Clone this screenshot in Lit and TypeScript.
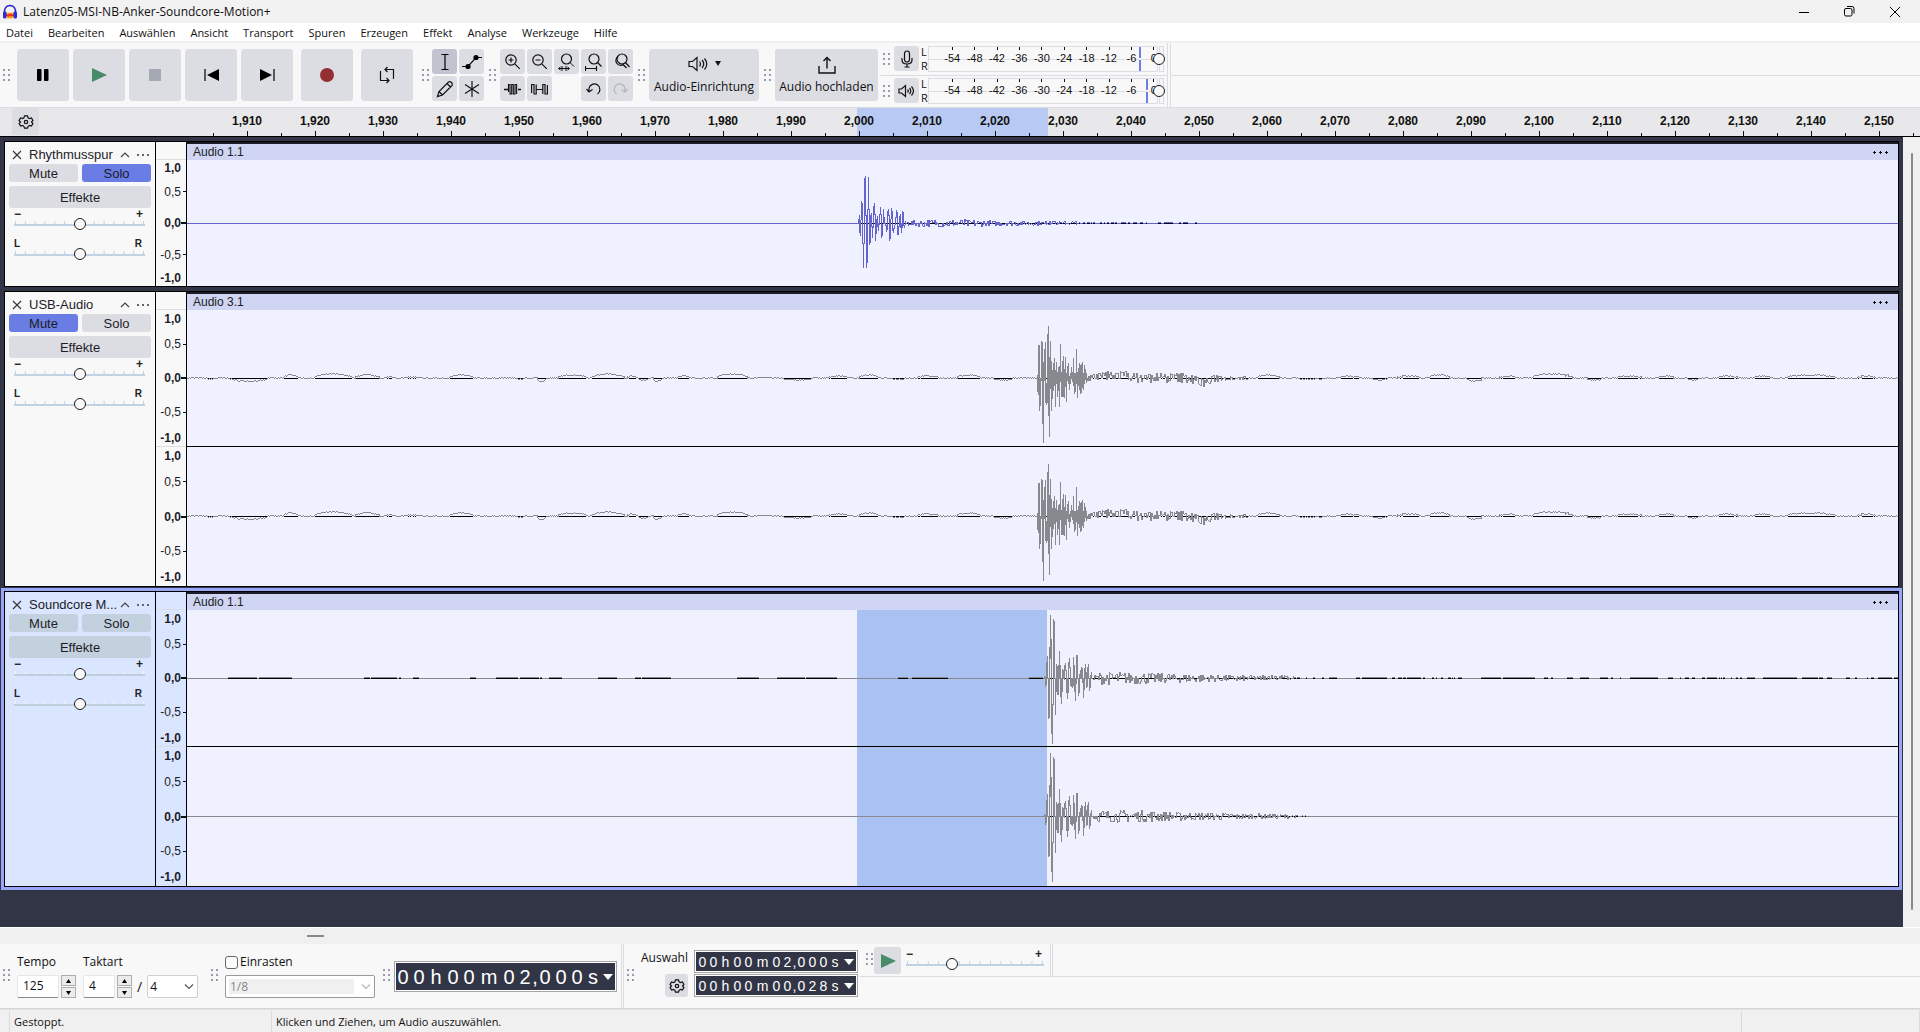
import { LitElement, html, svg, css, nothing, TemplateResult, SVGTemplateResult } from 'lit';
import { customElement, property } from 'lit/decorators.js';

/* ---------- icons ---------- */

const icon = (w: number, h: number, body: SVGTemplateResult) =>
  html`<svg width=${w} height=${h} viewBox="0 0 ${w} ${h}" fill="none" stroke="#111" stroke-width="1.2" aria-hidden="true">${body}</svg>`;

const ICONS: Record<string, TemplateResult> = {
  logo: icon(16, 16, svg`
    <path d="M3 7q2 2 2 7.500h6q0-5.500 2-7.500-2 2-5 2T3 7z" fill="#ffb52e" stroke="none"/>
    <path d="M4 10q4-2.500 8 0v3q-4 1.500-8 0z" fill="#ff9c1c" stroke="none"/>
    <path d="M3 11l2-1 1 1 1-2 1 2 1-2 1 2 1-1 2 1-2 1-5 .6z" fill="#ee2a1c" stroke="none"/>
    <path d="M2.500 9C2 4 4.500 1.500 8 1.500S14 4 13.500 9" stroke="#2525d8" stroke-width="1.600"/>
    <rect x="1" y="7.500" width="3.500" height="7" rx="1.500" fill="#2a2ae6" stroke="none"/>
    <rect x="11.500" y="7.500" width="3.500" height="7" rx="1.500" fill="#2a2ae6" stroke="none"/>`),
  pause: icon(14, 14, svg`<path d="M1.500 1.500h3.500v11H1.500zM8.500 1.500H12v11H8.500z" fill="#000" stroke="#000" stroke-linejoin="round" stroke-width="1"/>`),
  play: icon(16, 14, svg`<path d="M1 0L16 7 1 14z" fill="#4a8c6a" stroke="none"/>`),
  stop: icon(12, 12, svg`<path d="M0 0h12v12H0z" fill="#a4a8b3" stroke="none"/>`),
  start: icon(15, 14, svg`<path d="M1 1v12" stroke="#000"/><path d="M15 1v12L3 7z" fill="#000" stroke="none"/>`),
  end: icon(15, 14, svg`<path d="M14 1v12" stroke="#000"/><path d="M0 1v12l12-6z" fill="#000" stroke="none"/>`),
  record: icon(14, 14, svg`<circle cx="7" cy="7" r="7" fill="#942f31" stroke="none"/>`),
  loop: icon(16, 18, svg`<path d="M6 3.500H14.500V13M10 14.500H1.500V5M8.500 1L6 3.500l2.500 2.500M7.500 12l2.500 2.500L7.500 17"/>`),
  ibeam: icon(16, 18, svg`<path d="M4.500 1.500h7M8 1.500v15M4.500 16.500h7" stroke="#000"/>`),
  envelope: icon(20, 18, svg`<path d="M0 13.500h6L14 4.500h6" stroke="#000"/><circle cx="6" cy="13.500" r="2.600" fill="#000" stroke="none"/><circle cx="14" cy="4.500" r="2.600" fill="#000" stroke="none"/>`),
  pencil: icon(18, 18, svg`<path d="M1.500 16.500l1.500-5L12.500 2q1.500-1 3 .5t.5 3L6.500 15zM11 3.500l3.500 3.500M3 11.500L6.500 15"/>`),
  star: icon(16, 16, svg`<path d="M8 0v16M1 3.500l14 9M15 3.500L1 12.500"/>`),
  zoomin: icon(17, 17, svg`<circle cx="7" cy="7" r="5.200"/><path d="M10.800 10.800l5 5M4.500 7h5M7 4.500v5"/>`),
  zoomout: icon(17, 17, svg`<circle cx="7" cy="7" r="5.200"/><path d="M10.800 10.800l5 5M4.500 7h5"/>`),
  zoomsel: icon(17, 18, svg`<circle cx="8.500" cy="6" r="5"/><path d="M12 9.500l4 4M1 15.500h10M4 13v5M8 13v5M2.500 14l-2 1.500 2 1.500M9.500 14l2 1.500-2 1.500" stroke-width="1"/>`),
  zoomfit: icon(17, 18, svg`<circle cx="9" cy="6" r="5"/><path d="M12.500 9.500l4 4"/><path d="M.5 13v5M11.500 13v5M1 15.500h10"/>`),
  zoomtoggle: icon(18, 17, svg`<circle cx="10" cy="6" r="5"/><path d="M13.500 9.500l4 4.500"/><path d="M6 3.500a4.500 4.500 0 1 0 5.500 8M10.500 11l4 4"/>`),
  trim: icon(17, 14, svg`<path d="M0 7.500h4M14 7.500h3" stroke-width="1.300"/><path d="M4.500 10V2.500h1.500v9.500h1.700V2.500h1.600v9.500h1.700V2.500h1.600v9.500" stroke-width="1.100"/>`),
  silence: icon(17, 14, svg`<path d="M.6 11V2.500h2.400v9.500h2.200V2.500M5 7.500h7M11.800 12V2.500H14V12h2.400V3" stroke-width="1.200"/>`),
  undo: icon(17, 15, svg`<path d="M4 10V7.500a5.500 5.500 0 1 1 8.500 5.500M1.500 8L4 11l3.500-2.500"/>`),
  redo: icon(17, 15, svg`<path d="M13 10V7.500A5.500 5.500 0 1 0 4.500 13M15.500 8L13 11 9.500 8.500" stroke="#b2b4bb"/>`),
  speaker: icon(20, 16, svg`<path d="M1 5.500h3.500L9 1.500v13L4.500 10.500H1z"/><path d="M11.500 5.500q2 2.500 0 5M14 4q3.500 4 0 8M16.500 2.500q4.500 5.500 0 11"/>`),
  speakersmall: icon(17, 14, svg`<path d="M1 5h2.500L7.500 1.500v11L3.500 9H1z"/><path d="M9.500 5.500q1.500 1.500 0 3M11.500 4q2.500 3 0 6M13.500 2.500q4 4.500 0 9"/>`),
  caret: icon(6, 6, svg`<path d="M0 0h6L3 5z" fill="#111" stroke="none"/>`),
  upload: icon(18, 18, svg`<path d="M1 10v7h16v-7M9 12.500V1.500M5.500 5L9 1.500 12.500 5" stroke-width="1.400"/>`),
  mic: icon(12, 18, svg`<rect x="3.500" y="1" width="5" height="11" rx="2.500"/><path d="M1 8v2q0 4 5 4t5-4V8M6 14v3M3.500 17h5"/>`),
  gear: icon(16, 16, svg`<circle cx="8" cy="8" r="1.700"/><path d="M6.500 1.800h3l.6 2 1.300.7 2-.5 1.500 2.500-1.400 1.500 1.400 1.500-1.500 2.600-2-.6-1.300.8-.6 1.900h-3l-.6-1.900-1.300-.8-2 .6L1.100 9.500 2.500 8 1.100 6.500 2.600 4l2 .5 1.300-.7z"/>`),
  close: icon(10, 10, svg`<path d="M1 1l8 8M9 1L1 9" stroke="#333" stroke-width="1.100"/>`),
  up: icon(10, 6, svg`<path d="M1 5l4-4 4 4" stroke="#444"/>`),
  dots: icon(12, 2, svg`<path d="M0 0h2v2H0zM5 0h2v2H5zM10 0h2v2h-2z" fill="#666" stroke="none"/>`),
  clipdots: icon(15, 3, svg`<path d="M1 0h1v3H1zM0 1h3v1H0zM7 0h1v3H7zM6 1h3v1H6zM13 0h1v3h-1zM12 1h3v1h-3z" fill="#111" stroke="none"/>`),
  min: icon(10, 10, svg`<path d="M0 5.500h10" stroke="#000" stroke-width="1"/>`),
  max: icon(11, 11, svg`<rect x=".5" y="2.500" width="7.500" height="7.500" rx="1.500" stroke="#000" stroke-width="1"/><path d="M3 .5h5q2 0 2 2v5" stroke="#000" stroke-width="1"/>`),
  winclose: icon(10, 10, svg`<path d="M0 0l10 10M10 0L0 10" stroke="#000" stroke-width="1"/>`),
  chevron: icon(10, 6, svg`<path d="M1 .5l4 4 4-4" stroke="#555"/>`),
  chevronoff: icon(10, 6, svg`<path d="M1 .5l4 4 4-4" stroke="#bbb"/>`),
  spinup: icon(5, 4, svg`<path d="M0 4h5L2.500 0z" fill="#000" stroke="none"/>`),
  spindown: icon(5, 4, svg`<path d="M0 0h5L2.500 4z" fill="#000" stroke="none"/>`),
  whitecaret: icon(10, 6, svg`<path d="M0 0h10L5 6z" fill="#fff" stroke="none"/>`),
};

/* ---------- waveform data ---------- */

type Column = [number, number];
interface Wave {
  start: number;
  columns: Column[];
  tail: [number, number][];
  drift: [number, number, number][];
}

const pairs = (s: string): Column[] =>
  s.trim().split(/\s+/).map((p) => p.split(',').map(Number) as Column);

/* Each pair is the highest and lowest sample of one pixel column. */
const CLICK: Wave = {
  start: 671,
  columns: pairs(`4,0 8,-9 3,-12 22,4 20,-20 -20,-44 45,-20 47,8 8,-44 14,-39 46,14 14,-21 8,-19 10,-3 -3,-14 17,-4
    20,9 9,-17 4,-10 7,-3 0,-7 9,-1 16,9 9,-14 -1,-12 14,0 6,0 0,-2 -2,-8 12,-6 14,8 8,-17 4,-15 15,5 12,-7
    -5,-9 -2,-5 6,-1 13,6 11,-11 -3,-11 7,-3 9,-4 0,-9 12,-4 11,-2 -2,-4 2,-1`),
  tail: [[719, 2], [730, 4], [775, 4], [800, 3], [850, 2], [890, 1], [1010, 1], [1012, 0]],
  drift: [[860, 150, 1]],
};

const USB: Wave = {
  start: 850,
  columns: pairs(`3,-13 33,-16 33,-32 0,-27 37,-2 36,-45 16,-64 29,-2 36,-24 -5,-26 44,-24 52,-37 21,-58 37,-10 17,-32
    8,-20 15,-12 20,-7 8,-28 16,-5 6,-18 11,-12 12,-28 34,-3 6,-18 17,-18 22,-18 9,-19 21,-8 5,-23 12,-2 15,-5
    2,-11 5,-5 11,0 6,-3 20,-7 5,-15 5,-13 29,-5 6,-19 10,-7 15,-11 13,-15 14,-14 16,-9 5,-11 13,-5 9,-1 5,-4`),
  tail: [[900, 5], [925, 5], [960, 5], [1010, 6], [1030, 4], [1045, 2], [1065, 1], [1100, 1], [4000, 1]],
  drift: [[20, 10, -1], [43, 38, -3], [96, 16, 3], [127, 38, 4], [168, 24, 3], [196, 14, 1], [218, 14, 1], [262, 24, 3],
    [328, 10, -1], [350, 9, -3], [371, 29, 3], [405, 32, 4], [440, 9, 2], [451, 11, -2], [466, 9, -3], [490, 14, 2],
    [530, 30, 4], [570, 14, 1], [596, 28, -2], [640, 22, 2], [672, 20, 3], [704, 14, -1], [730, 22, 2], [770, 24, 3],
    [806, 20, -2], [912, 34, 3], [1005, 22, -4], [1070, 22, 3], [1110, 30, -1], [1150, 24, 2], [1186, 14, -2],
    [1210, 24, 2], [1242, 20, 3], [1280, 14, -3], [1312, 20, 2], [1345, 40, 4], [1400, 14, -2], [1430, 24, 2],
    [1470, 16, 2], [1500, 12, -2], [1530, 20, 2], [1566, 20, 2], [1600, 50, 3], [1670, 18, 2]],
};

const SPEAKER: Wave = {
  start: 857,
  columns: pairs(`2,0 1,-8 16,-6 22,0 0,-40 31,-39 63,20 39,-55 -26,-65 59,-26 57,0 0,-36 14,-13 12,-16 13,-16 27,0
    13,-18 0,-25 9,-13 8,0 13,-1 15,8 8,-14 0,-20 16,-14 20,11 11,-7 0,-8 0,-9 21,-7 13,-13 0,-22 23,-5 23,0
    0,-17 4,-14 8,0 11,0 10,-4 0,-19 10,-11 14,0 6,-9 11,-8 14,0 0,-12 3,-9 6,0`),
  tail: [[905, 3], [914, 7], [960, 6], [985, 5], [1020, 4], [1060, 3], [1100, 2], [1120, 1], [1140, 0]],
  drift: [],
};

const SPEAKER_LEFT: Wave = {
  ...SPEAKER,
  tail: [...SPEAKER.tail.slice(0, -1), [1200, 1], [1201, 0]],
  drift: [[41, 43, 1], [70, 35, 1], [95, 8, 1], [177, 37, 1], [226, 6, 1], [283, 6, 1], [309, 47, 1], [362, 13, 1], [411, 19, 1],
    [448, 36, 1], [550, 22, 1], [590, 60, 1], [711, 50, 1], [842, 14, 1], [1075, 700, 1]],
};

const WAVE_LENGTH = 3600;

function level(points: [number, number][], x: number): number {
  if (x < points[0][0]) return 0;
  for (let i = 1; i < points.length; i++) {
    if (x <= points[i][0]) {
      const [x0, a] = points[i - 1];
      const [x1, b] = points[i];
      return a + ((b - a) * (x - x0)) / (x1 - x0);
    }
  }
  return 0;
}

/* Returns the wave itself and the parts of the zero line that it leaves open. */
function wavePaths(w: Wave, mid: number): { wave: string; zero: string } {
  let seed = 7;
  const rnd = () => {
    seed = (seed * 16807) % 2147483647;
    return seed / 2147483647;
  };
  const noisy = w === USB;
  let wave = '';
  let zero = '';
  let last = 0;
  let run = 0;
  for (let x = 0; x < WAVE_LENGTH; x++) {
    const c = w.columns[x - w.start];
    let hi: number;
    let lo: number;
    if (c) {
      [hi, lo] = c;
      last = 0;
    } else {
      let base = 0;
      for (const [s, len, amp] of w.drift) {
        if (x >= s && x < s + len) {
          base = Math.abs(amp) === 1 && !noisy ? amp : amp * Math.sqrt(Math.sin((Math.PI * (x - s + 1)) / (len + 1)));
        }
      }
      if (!noisy && base) {
        /* quantised silence flips between two neighbouring steps */
        if (run === 0) {
          if (w === CLICK) run = rnd() < 0.5 ? -Math.ceil(rnd() * 3) : Math.ceil(rnd() * 2);
          else if (x > 1000) run = rnd() < 0.5 ? -Math.ceil(rnd() * 5) : Math.ceil(rnd() * (x % 130 < 60 ? 14 : 2));
          else run = rnd() < 0.12 ? -Math.ceil(rnd() * 3) : Math.ceil(rnd() * 8);
        }
        if (run < 0) {
          base = 0;
          run++;
        } else {
          run--;
        }
      }
      const amp = x < w.start ? 0 : level(w.tail, x);
      const v = Math.round(base + (noisy ? (rnd() - 0.1) * 1 : 0) + amp * (rnd() * 2 - 0.95) * (amp > 1 ? 0.9 : 0.4));
      hi = Math.max(v, Math.abs(v - last) > 1 ? last : v);
      lo = Math.min(v, Math.abs(v - last) > 1 ? last : v);
      last = v;
    }
    wave += `M${x} ${mid - hi}h1v${hi - lo + 1}h-1z`;
    if (lo >= (noisy ? 2 : 1) || hi <= -1) zero += `M${x} ${mid}h1v1h-1z`;
  }
  return { wave, zero };
}

interface Track {
  name: string;
  clip: string;
  mute: boolean;
  solo: boolean;
  focused: boolean;
  color: string;
  channels: { wave: Wave; height: number; mid: number }[];
}

const TRACKS: Track[] = [
  { name: 'Rhythmusspur', clip: 'Audio 1.1', mute: false, solo: true, focused: false, color: '#6464cc',
    channels: [{ wave: CLICK, height: 126, mid: 63 }] },
  { name: 'USB-Audio', clip: 'Audio 3.1', mute: true, solo: false, focused: false, color: '#88888f',
    channels: [{ wave: USB, height: 136, mid: 68 }, { wave: USB, height: 139, mid: 69 }] },
  { name: 'Soundcore M...', clip: 'Audio 1.1', mute: false, solo: false, focused: true, color: '#88888f',
    channels: [{ wave: SPEAKER_LEFT, height: 136, mid: 68 }, { wave: SPEAKER, height: 139, mid: 69 }] },
];

/* ---------- shared styles ---------- */

const base = css`
  * { box-sizing: border-box; }
  button { font: inherit; color: inherit; border: 0; padding: 0; margin: 0; background: #dcdde3; border-radius: 3px;
    display: flex; align-items: center; justify-content: center; }
  svg { display: block; flex: none; }
`;

/* ---------- slider with tick marks ---------- */

@customElement('tick-slider')
export class TickSlider extends LitElement {
  @property() label = '';
  @property() low = '';
  @property() high = '';
  @property({ type: Number }) value = 50;
  @property({ type: Boolean }) focused = false;

  static styles = [base, css`
    :host { display: block; font: bold 10px/12px "Liberation Sans", Arial, sans-serif; color: #222; }
    .ends { display: flex; justify-content: space-between; height: 9px; padding-right: 3px; }
    .sign { font-size: 12px; padding-right: 2px; }
    .range { appearance: none; display: block; width: 100%; height: 13px; margin: 0; background:
      linear-gradient(#bfd1e2, #bfd1e2) 0 7px / 100% 2px no-repeat,
      linear-gradient(90deg, #bfd1e2 1px, transparent 1px) 1px 4px / calc((100% - 3px) / 13) 3px repeat-x; }
    .range.light { background:
      linear-gradient(#c0cfdd, #c0cfdd) 0 7px / 100% 2px no-repeat,
      linear-gradient(90deg, #f0f4fa 1px, transparent 1px) 1px 4px / calc((100% - 3px) / 13) 3px repeat-x; }
    .range::-webkit-slider-thumb { appearance: none; width: 12px; height: 12px; border-radius: 50%;
      border: 1px solid #1c1c1c; background: #fafafa; }
  `];

  render() {
    return html`
      <div class=${this.low === '−' ? 'ends sign' : 'ends'}><span>${this.low}</span><span>${this.high}</span></div>
      <input class=${this.focused ? 'range light' : 'range'} type="range" min="0" max="100"
        .value=${String(this.value)} aria-label=${this.label}>`;
  }
}

/* ---------- time field ---------- */

@customElement('time-field')
export class TimeField extends LitElement {
  @property() text = '';
  @property() label = '';
  @property({ type: Boolean }) large = false;

  static styles = [base, css`
    :host { display: block; color: #fff; font-family: "Liberation Sans", Arial, sans-serif; }
    .box { display: flex; align-items: center; background: #323545; border: 1px solid #a5a5a8; outline: 1px solid #fff;
      outline-offset: -2px; font-size: 14px; height: 23px; padding: 0 3px 0 2px; }
    .box.large { font-size: 20px; height: 31px; padding: 0 3px 0 0; }
    .digits { display: flex; }
    .cell { width: 11px; display: flex; justify-content: center; }
    .cell.h { width: 13px; }
    .cell.m { width: 17px; }
    .cell.s { width: 12px; }
    .cell.comma { width: 3px; }
    .large .cell { width: 16px; }
    .large .cell.h { width: 18px; }
    .large .cell.m { width: 24px; }
    .large .cell.comma { width: 4px; }
    .drop { background: none; margin-left: auto; width: 10px; height: 16px; }
  `];

  render() {
    const cell = (c: string) => (/[hms]/.test(c) ? `cell ${c}` : c === ',' ? 'cell comma' : 'cell');
    return html`<div class=${this.large ? 'box large' : 'box'} role="group" aria-label=${this.label}>
      <div class="digits">${[...this.text].map((c) => html`<span class=${cell(c)}>${c}</span>`)}</div>
      <button class="drop" aria-label="Format">${ICONS.whitecaret}</button>
    </div>`;
  }
}

/* ---------- level meter ---------- */

@customElement('level-meter')
export class LevelMeter extends LitElement {
  @property() kind = 'mic';
  @property() label = '';
  @property({ type: Number }) peak = 0;

  static styles = [base, css`
    :host { display: flex; align-items: center; height: 31px; font: 11px/14px "Liberation Sans", Arial, sans-serif; color: #111; }
    .btn { width: 25px; height: 25px; }
    .lr { display: flex; flex-direction: column; margin-left: 2px; width: 7px; font: 11px/14px "Open Sans", sans-serif; }
    .scale { position: relative; width: 230px; height: 26px; border: 1px solid #dcdde3; display: flex; padding-left: 12px;
      background: linear-gradient(#dcdde3, #dcdde3) 0 12px / 100% 1px no-repeat; }
    .marks { display: flex; flex: 1; margin-right: -8px; }
    .mark { flex: 1; display: flex; flex-direction: column; align-items: center; line-height: 17px; }
    .mark::before { content: ""; width: 1px; height: 3px; background: #111; }
    .peak { position: absolute; top: 0; width: 2px; height: 24px;
      background: linear-gradient(#6a7fe6 11px, #f8f8f8 11px, #f8f8f8 13px, #6a7fe6 13px); }
    .clip { width: 5px; height: 26px; border: 1px solid #dcdde3; margin-left: 1px; }
    .thumb { position: absolute; left: 0; top: 0; width: 236px; height: 25px; margin: 0; appearance: none; background: none; }
    .thumb::-webkit-slider-thumb { appearance: none; width: 12px; height: 12px; border-radius: 50%; border: 1px solid #1c1c1c;
      background: #fafafa; }
  `];

  render() {
    return html`
      <button class="btn" aria-label=${this.label}>${ICONS[this.kind]}</button>
      <div class="lr"><span>L</span><span>R</span></div>
      <div class="scale">
        <div class="marks">${[-54, -48, -42, -36, -30, -24, -18, -12, -6, 0].map((n) => html`<span class="mark">${n}</span>`)}</div>
        <div class="peak" style="left:${this.peak}px"></div>
        <input class="thumb" type="range" min="0" max="100" .value=${'100'} aria-label=${this.label}>
      </div>
      <div class="clip"></div>`;
  }
}

/* ---------- one audio track ---------- */

@customElement('audio-track')
export class AudioTrack extends LitElement {
  @property({ attribute: false }) track!: Track;

  static styles = [base, css`
    :host { display: block; font-family: "Liberation Sans", Arial, sans-serif; color: #1c1c28; }
    .track { display: flex; border: 1px solid #000; background: #f8f8f8; }
    .track.focused { background: #dae6ff; box-shadow: 0 0 0 3px #98a5f8; }
    .panel { width: 151px; flex: none; border-right: 1px solid #000; padding: 4px 4px 0; font-size: 13px; line-height: 18px; }
    .head { display: flex; align-items: center; height: 18px; padding: 0 2px 0 3px; }
    .icon { background: none; width: 10px; height: 16px; flex: none; }
    .icon.wide { width: 12px; margin-left: 7px; }
    .name { flex: 1; padding-left: 7px; white-space: nowrap; }
    .pair { display: flex; gap: 4px; padding-bottom: 4px; }
    .tbtn { flex: 1; height: 18px; padding-top: 2px; }
    .tbtn.full { width: 100%; height: 22px; }
    .tbtn.on { background: #6a7de4; }
    .focused .tbtn { background: #c3d1de; }
    .gain { padding: 0 6px 0 5px; }
    .pan { padding: 0 6px 0 5px; margin-top: 8px; }
    .vruler { width: 31px; flex: none; border-right: 1px solid #000; padding-top: 17px; display: flex; flex-direction: column;
      font-size: 12px; line-height: 14px; }
    .vscale { border-top: 1px solid #dcdde3; display: grid; grid-template-rows: 1fr 2fr 2fr 2fr 1fr; align-items: center; }
    .vl { display: flex; justify-content: flex-end; align-items: center; gap: 2px; }
    .vl::after { content: ""; width: 3px; height: 1px; background: #111; }
    .vl.zero { gap: 0; }
    .vl.zero::after { width: 5px; height: 2px; }
    .vl.edge::after { background: none; }
    .strong { font-weight: bold; }
    .clip { flex: 1; min-width: 0; background: #eff1ff; }
    .cliphead { display: flex; align-items: center; justify-content: space-between; height: 18px; border-top: 2px solid #1c1c28;
      background: #cfd5f2; padding: 0 10px 0 6px; font-size: 12px; line-height: 14px; }
    .clipmenu { background: none; }
    .lane { position: relative; overflow: hidden; border-top: 1px solid #000; }
    .lane.first { border-top: 0; }
    .sel { position: absolute; left: 670px; top: 0; bottom: 0; width: 190px; background: #aac2f2; }
    .wave { position: relative; display: block; width: 100%; }
  `];

  render() {
    const t = this.track;
    return html`<section class=${t.focused ? 'track focused' : 'track'}>
      <div class="panel">
        <div class="head">
          <button class="icon" aria-label="Schließen">${ICONS.close}</button>
          <span class="name">${t.name}</span>
          <button class="icon" aria-label="Einklappen">${ICONS.up}</button>
          <button class="icon wide" aria-label="Menü">${ICONS.dots}</button>
        </div>
        <div class="pair">
          <button class=${t.mute ? 'tbtn on' : 'tbtn'}>Mute</button>
          <button class=${t.solo ? 'tbtn on' : 'tbtn'}>Solo</button>
        </div>
        <button class="tbtn full">Effekte</button>
        <tick-slider class="gain" label="Lautstärke" low="−" high="+" ?focused=${t.focused}></tick-slider>
        <tick-slider class="pan" label="Panorama" low="L" high="R" ?focused=${t.focused}></tick-slider>
      </div>
      <div class="vruler">
        ${t.channels.map((c) => html`<div class="vscale" style="height:${c.height + 1}px">
          <span class="vl edge strong">1,0</span><span class="vl">0,5</span><span class="vl zero strong">0,0</span>
          <span class="vl">-0,5</span><span class="vl edge strong">-1,0</span></div>`)}
      </div>
      <div class="clip">
        <div class="cliphead"><span>${t.clip}</span><button class="clipmenu" aria-label="Clip-Menü">${ICONS.clipdots}</button></div>
        ${t.channels.map((c, i) => {
          const p = wavePaths(c.wave, c.mid);
          return html`<div class=${i ? 'lane' : 'lane first'}>
          ${t.focused ? html`<div class="sel"></div>` : nothing}
          <svg class="wave" height=${c.height} shape-rendering="crispEdges">
            <path d=${p.zero} fill="#000"/>
            <path d=${p.wave} fill=${t.color}/>
          </svg></div>`;
        })}
      </div>
    </section>`;
  }
}

/* ---------- application ---------- */

const MENU = ['Datei', 'Bearbeiten', 'Auswählen', 'Ansicht', 'Transport', 'Spuren', 'Erzeugen', 'Effekt', 'Analyse', 'Werkzeuge', 'Hilfe'];

const TRANSPORT: [string, string][] = [
  ['pause', 'Pause'], ['play', 'Wiedergabe'], ['stop', 'Stopp'], ['start', 'Zum Anfang'], ['end', 'Zum Ende'],
  ['record', 'Aufnahme'], ['loop', 'Schleife']];

@customElement('app-root')
export class AppRoot extends LitElement {
  static styles = [base, css`
    :host { display: flex; flex-direction: column; min-height: 100vh; background: #f8f8f8; color: #111;
      font: 11px/16px "Open Sans", "Noto Sans", sans-serif; overflow: hidden; }
    .title { display: flex; align-items: center; height: 23px; background: #f3f2f2; padding: 0 20px 0 2px; gap: 5px; }
    .caption { flex: 1; font-size: 12px; }
    .win { display: flex; gap: 35px; align-items: center; }
    .winbtn { background: none; }
    .menu { display: flex; gap: 15px; height: 20px; padding: 1px 6px 0; background: #fff; align-items: center;
      border-bottom: 2px solid #f0f0f0; }
    .menu a { color: inherit; text-decoration: none; }

    .dock { display: flex; height: 65px; align-items: center; padding-left: 3px; border-bottom: 1px solid #dcdde3; }
    .grip { width: 7px; height: 12px; flex: none; background:
      conic-gradient(at 2px 2px, transparent 75%, #9a9bb0 0) 0 0 / 5px 5px; }
    .transport { display: flex; gap: 4px; margin: 0 9px 0 7px; }
    .big { width: 52px; height: 52px; }
    .gap { margin-left: 4px; }
    .tools { display: grid; grid-template-columns: repeat(2, 25px); gap: 2px; margin: 0 5px 0 3px; }
    .zooms { display: grid; grid-template-columns: repeat(5, 25px); gap: 2px; margin: 0 5px 0 4px; }
    .tool { width: 25px; height: 25px; }
    .tool.on { background: #c1c3d1; }
    .labelled { flex-direction: column; height: 52px; font-size: 12px; gap: 7px; flex: none; }
    .iconrow { display: flex; align-items: center; gap: 7px; }
    .setup { width: 110px; margin: 0 5px 0 4px; }
    .share { width: 103px; gap: 5px; margin: 0 2px 0 4px; }
    .meters { display: flex; flex-direction: column; align-self: stretch; border-right: 1px solid #dcdde3; }
    .meterrow { display: flex; align-items: center; height: 32px; padding: 0 3px 1px; gap: 4px; }
    .meterrow + .meterrow { border-top: 1px solid #dcdde3; padding-bottom: 2px; }
    .rest { flex: 1; align-self: stretch; margin-left: 2px; border-left: 1px solid #dcdde3;
      background: linear-gradient(#dcdde3, #dcdde3) 0 32px / 100% 1px no-repeat; }

    .ruler { display: flex; height: 29px; background: #e8e8ea; border-bottom: 1px solid #000; overflow: hidden; }
    .rgear { width: 27px; height: 27px; margin-left: 12px; flex: none; }
    .timeline { position: relative; flex: 1; min-width: 0; margin-left: 140px; display: flex; overflow: hidden; }
    .rsel { position: absolute; left: 678px; top: 0; bottom: 0; width: 191px; background: #b8caf4; }
    .tick { position: relative; flex: none; width: 68px; height: 28px; display: flex; justify-content: center;
      font: bold 12px/26px "Liberation Sans", Arial, sans-serif; background:
      linear-gradient(#111, #111) 34px 23px / 1px 5px no-repeat, linear-gradient(#111, #111) 0 25px / 1px 3px no-repeat; }
    .tick.lead { width: 34px; background: none; }

    .workspace { flex: 1; display: flex; background: #f0f0f0; }
    .tracks { flex: 1; min-width: 0; background: #323545; padding: 4px 4px 0; display: flex; flex-direction: column; gap: 4px; }
    .scroll { display: flex; width: 17px; padding: 16px 0 17px 8px; }
    .scrollbar { width: 2px; background: #888; border-radius: 1px; }
    .hscroll { height: 17px; background: #f0f0f0; border-top: 1px solid #fff; padding: 7px 0 0 307px; }
    .hthumb { width: 17px; height: 2px; background: #888; }

    .bottom { display: flex; height: 65px; border-bottom: 1px solid #d6d6da; padding-left: 3px; font-size: 12px; }
    .bottom > .grip { margin-top: 25px; }
    .field { display: flex; flex-direction: column; gap: 5px; padding-top: 10px; }
    .field.tempo { margin: 0 7px; width: 59px; }
    .field.sig { width: 115px; margin-right: 13px; }
    .field.snap { width: 150px; margin: 0 8px 0 7px; }
    .row { display: flex; align-items: center; height: 23px; }
    .num { font: inherit; color: #111; border: 1px solid #e6e6e6; border-bottom: 1px solid #888; border-radius: 2px;
      background: #fff; padding: 0 0 2px 5px; height: 23px; width: 42px; appearance: textfield; }
    .num.short { width: 32px; }
    .num::-webkit-inner-spin-button { display: none; }
    .spin { display: flex; flex-direction: column; gap: 1px; margin-left: 2px; }
    .spin button { width: 15px; height: 11px; border: 1px solid #adadad; background: #ececec; border-radius: 0; }
    .slash { margin: 0 5px; font-size: 14px; }
    .pick { position: relative; display: flex; align-items: center; height: 23px; }
    .row .pick { flex: 1; }
    .pick svg { position: absolute; right: 4px; pointer-events: none; }
    .select { appearance: none; font: inherit; color: #111; width: 100%; height: 23px; background: #fff; border: 1px solid #d0d0d0;
      border-radius: 2px; padding: 0 2px; }
    .select:disabled { color: #888; border-color: #999; background: linear-gradient(#f0f0f0, #f0f0f0) 3px 3px / calc(100% - 23px) 15px no-repeat #fff;
      opacity: 1; padding-left: 4px; }
    .check { display: flex; align-items: center; gap: 2px; height: 16px; }
    .checkbox { appearance: none; width: 13px; height: 13px; margin: 0; border: 1px solid #666; border-radius: 3px; background: #fbfbfb; }
    .clock { width: 223px; margin: 17px 4px 0 4px; }
    .rule { width: 3px; border: 1px solid #dcdde3; border-width: 0 1px; flex: none; }
    .rule + .grip { margin-left: 3px; }
    .selection { display: grid; grid-template-columns: 47px 164px; column-gap: 6px; row-gap: 1px; margin: 6px 2px 0 7px;
      align-content: start; justify-items: end; }
    .selection time-field { width: 164px; }
    .sgear { width: 23px; height: 23px; }
    .playspeed { flex: 1; display: flex; flex-direction: column; }
    .speedrow { display: flex; height: 33px; border-bottom: 1px solid #dcdde3; padding-left: 6px; align-items: flex-start; }
    .speedrow > .grip { margin-top: 9px; }
    .speedplay { width: 27px; height: 27px; margin: 3px 5px 0 1px; }
    .speed { width: 138px; margin: 4px 6px 0 0; }
    .speedrow .rule { align-self: stretch; }

    .status { display: flex; height: 23px; background: #f0f0f0; align-items: center; padding-left: 9px; border-top: 1px solid #e4e4e6; }
    .cell { height: 21px; line-height: 21px; border-left: 1px solid #dadada; padding-left: 4px; }
    .state { width: 262px; }
    .hint { flex: 1; }
    .extra { width: 179px; border-right: 1px solid #dadada; }
  `];

  private tool(name: string, label: string, on = false) {
    return html`<button class=${on ? 'tool on' : 'tool'} aria-label=${label}>${ICONS[name]}</button>`;
  }

  private number(id: string, value: string, short = false) {
    return html`<input class=${short ? 'num short' : 'num'} id=${id} type="number" .value=${value}>
      <div class="spin"><button aria-label="Mehr">${ICONS.spinup}</button><button aria-label="Weniger">${ICONS.spindown}</button></div>`;
  }

  render() {
    const ticks = Array.from({ length: 50 }, (_, i) =>
      i < 25 ? ((1910 + i * 10) / 1000).toFixed(3).replace('.', ',') : '');
    return html`
      <header class="title">${ICONS.logo}<span class="caption">Latenz05-MSI-NB-Anker-Soundcore-Motion+</span>
        <div class="win">
          <button class="winbtn" aria-label="Minimieren">${ICONS.min}</button>
          <button class="winbtn" aria-label="Wiederherstellen">${ICONS.max}</button>
          <button class="winbtn" aria-label="Fenster schließen">${ICONS.winclose}</button>
        </div>
      </header>
      <nav class="menu">${MENU.map((m) => html`<a href="#">${m}</a>`)}</nav>

      <div class="dock">
        <div class="grip"></div>
        <div class="transport">${TRANSPORT.map(([n, l], i) =>
          html`<button class=${i > 4 ? 'big gap' : 'big'} aria-label=${l}>${ICONS[n]}</button>`)}</div>
        <div class="grip"></div>
        <div class="tools">
          ${this.tool('ibeam', 'Auswahlwerkzeug', true)}${this.tool('envelope', 'Hüllkurve')}
          ${this.tool('pencil', 'Zeichnen')}${this.tool('star', 'Multiwerkzeug')}
        </div>
        <div class="grip"></div>
        <div class="zooms">
          ${this.tool('zoomin', 'Vergrößern')}${this.tool('zoomout', 'Verkleinern')}${this.tool('zoomsel', 'Auswahl einpassen')}
          ${this.tool('zoomfit', 'Projekt einpassen')}${this.tool('zoomtoggle', 'Zoom umschalten')}
          ${this.tool('trim', 'Trimmen')}${this.tool('silence', 'Stille')}<span></span>
          ${this.tool('undo', 'Rückgängig')}${this.tool('redo', 'Wiederherstellen')}
        </div>
        <div class="grip"></div>
        <button class="labelled setup"><span class="iconrow">${ICONS.speaker}${ICONS.caret}</span>Audio-Einrichtung</button>
        <div class="grip"></div>
        <button class="labelled share">${ICONS.upload}Audio hochladen</button>
        <div class="meters">
          <div class="meterrow"><div class="grip"></div><level-meter kind="mic" label="Aufnahmepegel" peak="210"></level-meter></div>
          <div class="meterrow"><div class="grip"></div><level-meter kind="speakersmall" label="Wiedergabepegel" peak="217"></level-meter></div>
        </div>
        <div class="rest"></div>
      </div>

      <div class="ruler">
        <button class="rgear" aria-label="Zeitachsen-Optionen">${ICONS.gear}</button>
        <div class="timeline"><div class="rsel"></div>
          <div class="tick lead"></div>
          ${ticks.map((t) => html`<div class="tick">${t}</div>`)}</div>
      </div>

      <main class="workspace">
        <div class="tracks">${TRACKS.map((t) => html`<audio-track .track=${t}></audio-track>`)}</div>
        <div class="scroll"><div class="scrollbar"></div></div>
      </main>
      <div class="hscroll"><div class="hthumb"></div></div>

      <div class="bottom">
        <div class="grip"></div>
        <div class="field tempo"><label for="tempo">Tempo</label><div class="row">${this.number('tempo', '125')}</div></div>
        <div class="field sig"><label for="upper">Taktart</label>
          <div class="row">${this.number('upper', '4', true)}<span class="slash">/</span>
            <div class="pick"><select class="select" aria-label="Notenwert"><option>4</option></select>${ICONS.chevron}</div></div>
        </div>
        <div class="grip"></div>
        <div class="field snap">
          <label class="check"><input class="checkbox" type="checkbox">Einrasten</label>
          <div class="pick"><select class="select" disabled aria-label="Raster"><option>1/8</option></select>${ICONS.chevronoff}</div>
        </div>
        <div class="grip"></div>
        <time-field class="clock" large label="Zeit" text="00h00m02,000s"></time-field>
        <div class="rule"></div>
        <div class="grip"></div>
        <div class="selection">
          <span>Auswahl</span><time-field label="Auswahlbeginn" text="00h00m02,000s"></time-field>
          <button class="sgear" aria-label="Auswahl-Optionen">${ICONS.gear}</button><time-field label="Auswahllänge" text="00h00m00,028s"></time-field>
        </div>
        <div class="playspeed">
          <div class="speedrow"><div class="grip"></div>
            <button class="speedplay" aria-label="Mit Geschwindigkeit abspielen">${ICONS.play}</button>
            <tick-slider class="speed" label="Geschwindigkeit" low="−" high="+" value="32"></tick-slider>
            <div class="rule"></div>
          </div>
        </div>
      </div>
      <footer class="status">
        <div class="cell state">Gestoppt.</div><div class="cell hint">Klicken und Ziehen, um Audio auszuwählen.</div><div class="cell extra"></div>
      </footer>`;
  }
}
